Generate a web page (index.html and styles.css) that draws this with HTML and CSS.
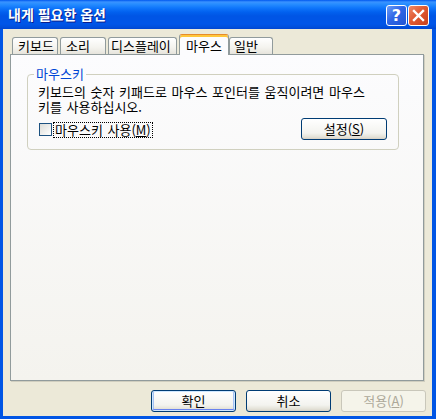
FILE: index.html
```html
<!DOCTYPE html>
<html lang="ko">
<head>
<meta charset="utf-8">
<title>내게 필요한 옵션</title>
<link rel="stylesheet" href="styles.css">
</head>
<body>
<div class="window">
  <div class="titlebar">
    <span class="title">내게 필요한 옵션</span>
    <div class="tbtns">
      <span class="tb help">?</span>
      <span class="tb close"><svg width="13" height="13" viewBox="0 0 13 13"><path d="M2 2 L11 11 M11 2 L2 11" stroke="#fff" stroke-width="2.4" stroke-linecap="square"/></svg></span>
    </div>
  </div>
  <div class="client">
    <div class="tabs">
      <span class="tab w46">키보드</span>
      <span class="tab w46">소리</span>
      <span class="tab w69">디스플레이</span>
      <span class="tab sel">마우스</span>
      <span class="tab after">일반</span>
    </div>
    <div class="panel">
      <fieldset class="group">
        <legend class="legend">마우스키</legend>
        <p class="desc">키보드의 숫자 키패드로 마우스 포인터를 움직이려면 마우스<br>키를 사용하십시오.</p>
        <div class="row">
          <label class="check"><span class="box"></span><span class="lbl">마우스키 사용(<u>M</u>)</span></label>
          <button class="btn">설정(<u>S</u>)</button>
        </div>
      </fieldset>
    </div>
    <div class="buttons">
      <button class="btn default">확인</button>
      <button class="btn">취소</button>
      <button class="btn disabled">적용(<u>A</u>)</button>
    </div>
  </div>
</div>
</body>
</html>
```
FILE: styles.css
```css
html, body {
  margin: 0;
  padding: 0;
  overflow: hidden;
  background: #ffffff;
}
body {
  font-family: "Noto Sans CJK KR", "Noto Sans", sans-serif;
  font-size: 13px;
  color: #000;
}
.window {
  width: 436px;
  height: 419px;
  display: flex;
  flex-direction: column;
  background: #0055e5;
  box-sizing: border-box;
}
.titlebar {
  height: 29px;
  flex: none;
  display: flex;
  align-items: center;
  justify-content: space-between;
  padding: 0 7px 0 8px;
  background: linear-gradient(#0058ee 0px, #3a93ff 2px, #288eff 4px, #0f76fb 8px, #0261ef 12px, #0055e5 16px, #0055e8 24px, #004fdc 27px, #0045d2 29px);
}
.title {
  color: #fff;
  font-weight: bold;
  font-size: 14px;
  line-height: 16px;
  margin-top: -1px;
  text-shadow: 1px 1px 0 #0a1e8c;
}
.tbtns {
  display: flex;
  gap: 1px;
  margin-top: 1px;
}
.tb {
  width: 21px;
  height: 21px;
  box-sizing: border-box;
  border: 1px solid #ffffff;
  border-radius: 3px;
  display: flex;
  align-items: center;
  justify-content: center;
}
.help {
  background: linear-gradient(135deg, #6c9cf7 0%, #2f66e6 45%, #2154d3 100%);
  color: #fff;
  font-family: "DejaVu Sans", sans-serif;
  font-weight: bold;
  font-size: 16px;
  line-height: 19px;
}
.close {
  background: linear-gradient(135deg, #f08a68 0%, #e05a33 45%, #c9401c 100%);
}
.client {
  flex: 1;
  margin: 0 4px 3px 3px;
  background: #ece9d8;
  display: flex;
  flex-direction: column;
  padding-top: 5px;
}
.tabs {
  height: 20px;
  display: flex;
  align-items: flex-end;
  gap: 2px;
  padding-left: 9px;
}
.tab {
  height: 17px;
  box-sizing: border-box;
  border: 1px solid #919b9c;
  border-bottom: none;
  border-radius: 3px 3px 0 0;
  background: linear-gradient(#ffffff, #f4f3ee 60%, #e6e4dc);
  padding: 0 0 0 5px;
  line-height: 15px;
  white-space: nowrap;
}
.w46 { width: 46px; }
.w69 { width: 69px; padding-left: 2px; }
.tab.sel {
  width: 50px;
  height: 21px;
  margin-bottom: -1px;
  position: relative;
  z-index: 1;
  background: #fcfcfe;
  border-top: 1px solid #e68b2c;
  box-shadow: inset 0 2px 0 #ffc73c;
  padding: 3px 0 0 0;
  text-align: center;
}
.tab.after {
  width: 44px;
  margin-left: -2px;
  padding-left: 4px;
}
.panel {
  height: 327px;
  box-sizing: border-box;
  margin: 0 8px 0 7px;
  border: 1px solid #919b9c;
  background: linear-gradient(#fcfcfe, #f4f3ee);
  box-shadow: 1px 1px 0 #d0cebf;
  padding-top: 12px;
}
.group {
  margin: 0 0 0 16px;
  width: 372px;
  box-sizing: border-box;
  border: 1px solid #d0d0bf;
  border-radius: 4px;
  padding: 3px 11px 9px 10px;
}
.legend {
  color: #0046d5;
  padding: 0 2px;
  margin-left: -4px;
  line-height: 14px;
}
.desc {
  margin: 0;
  line-height: 15px;
  word-spacing: 1px;
}
.row {
  margin-top: 4px;
  display: flex;
  align-items: center;
  justify-content: space-between;
}
.check {
  display: flex;
  align-items: center;
  gap: 2px;
  margin-left: 1px;
  margin-top: 1px;
}
.box {
  width: 13px;
  height: 13px;
  box-sizing: border-box;
  border: 1px solid #1c5180;
  background: linear-gradient(135deg, #dcdcd7, #ffffff);
}
.lbl {
  outline: 1px dotted #000;
  line-height: 14px;
  padding: 0 1px;
  word-spacing: 1px;
}
.btn {
  width: 86px;
  height: 22px;
  box-sizing: border-box;
  font-family: inherit;
  font-size: 13px;
  color: #000;
  border: 1px solid #003c74;
  border-radius: 3px;
  background: linear-gradient(#ffffff, #f3f3ef 70%, #e3e1d7 90%, #d6d0c5);
  padding: 0;
  line-height: 18px;
}
.btn.default {
  box-shadow: inset 0 0 0 1px #cee7ff, inset 0 -2px 0 0 #6982ee, inset 2px 0 0 0 #a6c2f3, inset -2px 0 0 0 #a6c2f3;
}
.btn.disabled {
  color: #aca899;
  border-color: #c9c7ba;
  background: #f5f4ea;
}
.buttons {
  margin-top: 9px;
  display: flex;
  justify-content: flex-end;
  gap: 10px;
  padding-right: 6px;
}
.buttons .btn {
  width: 85px;
}
```
